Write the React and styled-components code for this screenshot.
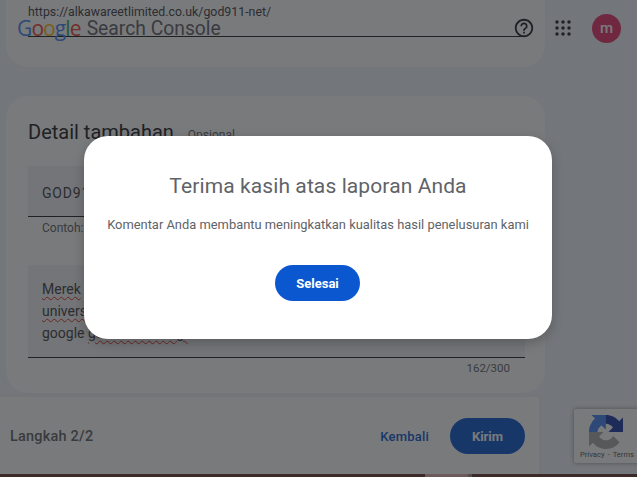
import React from "react";
import styled, { createGlobalStyle } from "styled-components";

const Global = createGlobalStyle`
  html, body { margin: 0; padding: 0; height: 100%; overflow: hidden; }
  body { font-family: Roboto, "Liberation Sans", sans-serif; background: #f0f4f9; }
`;
const Page = styled.div`
  width: 637px; height: 477px; display: flex; flex-direction: column;
  overflow: hidden; position: relative; background: #f0f4f9;
`;
const Main = styled.main`
  flex: 1; min-height: 0; width: 539px; margin-left: 6px;
  display: flex; flex-direction: column; gap: 29px;
`;
const Card = styled.section`
  background: #fff; border-radius: 0 0 22px 22px; padding: 0 20px 0 22px; box-sizing: border-box;
  height: ${p => p.$h}px; flex: none;
  ${p => p.$round && "border-radius: 22px; padding-top: 24px;"}
`;
const UrlField = styled.div`
  height: 37px; border-bottom: 1px solid #202124; box-sizing: border-box; padding-top: 4px;
  font-size: 12.35px; line-height: 17px; color: #3c4043;
`;
const TitleRow = styled.div`
  display: flex; align-items: baseline; gap: 14px; height: 46px;
`;
const CardTitle = styled.h2`
  margin: 0; font-weight: 400; font-size: 20px; line-height: 24px; color: #202124;
`;
const Optional = styled.span`font-size: 12px; color: #5f6368;`;
const Filled = styled.div`
  background: #f1f3f4; border-bottom: 1px solid #202124; box-sizing: border-box;
  height: ${p => p.$h}px; padding: ${p => p.$pt}px 14px 0; font-size: 14px; line-height: 22px; color: #3c4043;
  letter-spacing: ${p => p.$ls || 0}px; white-space: nowrap; overflow: hidden;
`;
const Hint = styled.div`
  font-size: 12px; line-height: 16px; color: #5f6368; padding: 3px 14px 0; height: 48px; box-sizing: border-box;
`;
const Spell = styled.span`text-decoration: underline wavy #d93025 1px; text-underline-offset: 2px;`;
const Counter = styled.div`
  font-size: 11.5px; line-height: 16px; color: #5f6368; text-align: right; padding: 2px 15px 0 0;
`;
const Footer = styled.footer`
  flex: none; height: 81px; width: 542px; box-sizing: border-box; background: #fff;
  border-top: 4px solid #f0f2f5; border-right: 3px solid #f0f2f5;
  display: flex; align-items: center; padding: 1px 14px 0 10px; gap: 21px;
`;
const Step = styled.span`font-size: 14.5px; font-weight: 500; color: #5f6368; margin-right: auto; letter-spacing: .2px;`;
const BackLink = styled.span`font-size: 13px; font-weight: 500; color: #0b57d0; letter-spacing: .2px;`;
const Pill = styled.button`
  border: 0; padding: 0; background: #0b57d0; color: #fff; font-family: inherit; font-weight: 700; font-size: 13px;
  width: ${p => p.$w}px; height: 36px; border-radius: 18px;
`;
const Strip = styled.div`
  flex: none; height: 3px; display: flex;
`;
const StripPart = styled.div`width: ${p => p.$w}px; background: ${p => p.$c}; flex: ${p => (p.$w ? "none" : "1")};`;
const Header = styled.header`
  position: absolute; left: 17px; right: 16px; top: 13px; height: 30px;
  display: flex; align-items: center;
`;
const Logo = styled.span`
  font-family: "Open Sans", Roboto, sans-serif; font-size: 21px; line-height: 30px; letter-spacing: -.9px; font-weight: 500;
`;
const Letter = styled.span`color: ${p => p.$c};`;
const Product = styled.span`
  font-size: 19.3px; line-height: 28px; color: #5f6368; margin: 1px auto 0 6px; font-family: Roboto, sans-serif;
`;
const Apps = styled.svg`margin-left: 20px; display: block;`;
const Help = styled.svg`display: block;`;
const Avatar = styled.div`
  width: 29px; height: 29px; border-radius: 50%; margin-left: 21px; background: #e8336d; color: #fff;
  font-size: 15px; font-weight: 500; display: flex; align-items: center; justify-content: center; padding-bottom: 1px; box-sizing: border-box;
`;
const Recaptcha = styled.aside`
  position: absolute; left: 574px; top: 409px; width: 70px; height: 54px; background: #fff; border-radius: 2px;
  box-shadow: 0 0 4px rgba(0,0,0,.4); display: flex; flex-direction: column; align-items: flex-start; padding: 6px 0 0 15px; box-sizing: border-box;
`;
const RecaptchaText = styled.div`
  font-size: 7.6px; line-height: 10px; color: #555; margin: 1px 0 0 -9px; white-space: nowrap; display: flex; gap: 3px;
`;
const Scrim = styled.div`
  position: absolute; inset: 0; background: rgba(32,33,36,.6);
`;
const Dialog = styled.div`
  position: absolute; left: 84px; top: 136px; width: 468px; height: 203px; background: #fff; border-radius: 24px;
  box-shadow: 0 4px 12px rgba(0,0,0,.22); display: flex; flex-direction: column; align-items: center;
  padding-top: 36px; box-sizing: border-box;
`;
const DialogTitle = styled.h1`
  margin: 0; font-weight: 400; font-size: 21px; line-height: 28px; color: #5f6368; letter-spacing: .1px;
`;
const DialogBody = styled.p`
  margin: 15px 0 0; font-size: 12.9px; line-height: 20px; color: #5f6368; white-space: nowrap;
`;
const DialogAction = styled(Pill)`margin: 30px 1px 0 0;`;

const G = [["G", "#4285f4"], ["o", "#ea4335"], ["o", "#fbbc05"], ["g", "#4285f4"], ["l", "#34a853"], ["e", "#ea4335"]];

export default function App() {
  return (
    <Page>
      <Global />
      <Main>
        <Card $h={67}>
          <UrlField>https://alkawareetlimited.co.uk/god911-net/</UrlField>
        </Card>
        <Card $h={297} $round>
          <TitleRow>
            <CardTitle>Detail tambahan</CardTitle>
            <Optional>Opsional</Optional>
          </TitleRow>
          <Filled $h={51} $pt={16} $ls={0.8}>GOD911</Filled>
          <Hint>Contoh: Nama merek</Hint>
          <Filled $h={93} $pt={13}>
            <Spell>Merek</Spell> GOD911 adalah<br />
            <Spell>universitas</Spell> terbaik<br />
            google <Spell>gacor sekarang.</Spell>
          </Filled>
          <Counter>162/300</Counter>
        </Card>
      </Main>
      <Footer>
        <Step>Langkah 2/2</Step>
        <BackLink>Kembali</BackLink>
        <Pill $w={75}>Kirim</Pill>
      </Footer>
      <Strip>
        <StripPart $w={425} $c="#64372d" />
        <StripPart $w={43} $c="#e1afaa" />
        <StripPart $w={4} $c="#a08c8c" />
        <StripPart $c="#64372d" />
      </Strip>
      <Header>
        <Logo>{G.map(([l, c], i) => <Letter key={i} $c={c}>{l}</Letter>)}</Logo>
        <Product>Search Console</Product>
        <Help width="22" height="22" viewBox="0 0 24 24" fill="#202124">
          <path d="M11 18h2v-2h-2v2zm1-16C6.48 2 2 6.48 2 12s4.48 10 10 10 10-4.48 10-10S17.52 2 12 2zm0 18c-4.41 0-8-3.59-8-8s3.59-8 8-8 8 3.59 8 8-3.59 8-8 8zm0-14c-2.21 0-4 1.79-4 4h2c0-1.1.9-2 2-2s2 .9 2 2c0 2-3 1.75-3 5h2c0-2.25 3-2.5 3-5 0-2.21-1.79-4-4-4z" />
        </Help>
        <Apps width="16" height="16" viewBox="0 0 16 16" fill="#202124">
          {[2, 8, 14].flatMap(y => [2, 8, 14].map(x => <circle key={`${x}-${y}`} cx={x} cy={y} r="1.7" />))}
        </Apps>
        <Avatar>m</Avatar>
      </Header>
      <Recaptcha>
        <svg width="34" height="34" viewBox="0 0 64 64">
          <path d="M64 31.955l-.033-1.37V4.687l-7.16 7.16C50.948 4.674 42.033.093 32.05.093c-10.4 0-19.622 4.96-25.458 12.64l11.736 11.86a15.55 15.55 0 0 1 4.754-5.334c2.05-1.6 4.952-2.906 8.968-2.906.485 0 .86.057 1.135.163 4.976.393 9.288 3.14 11.828 7.124l-8.307 8.307L64 31.953" fill="#1c3aa9" />
          <path d="M31.862.094l-1.37.033H4.594l7.16 7.16C4.58 13.147 0 22.06 0 32.046c0 .66.02 1.315.06 1.965L16 32.9c-.02-.28-.03-.56-.03-.85 0-.485.057-.86.163-1.135.393-4.976 3.14-9.288 7.124-11.828l8.307 8.307L31.86.095" fill="#4285f4" />
          <path d="M.001 32.045l.033 1.37v25.898l7.16-7.16c5.86 7.173 14.774 11.754 24.76 11.754 10.4 0 19.622-4.96 25.458-12.64L45.674 39.407a15.55 15.55 0 0 1-4.754 5.334c-2.05 1.6-4.952 2.906-8.968 2.906-.485 0-.86-.057-1.135-.163-4.976-.393-9.288-3.14-11.828-7.124l8.307-8.307-27.295-.008" fill="#ababab" />
        </svg>
        <RecaptchaText><span>Privacy</span><span>-</span><span>Terms</span></RecaptchaText>
      </Recaptcha>
      <Scrim />
      <Dialog>
        <DialogTitle>Terima kasih atas laporan Anda</DialogTitle>
        <DialogBody>Komentar Anda membantu meningkatkan kualitas hasil penelusuran kami</DialogBody>
        <DialogAction $w={85}>Selesai</DialogAction>
      </Dialog>
    </Page>
  );
}
